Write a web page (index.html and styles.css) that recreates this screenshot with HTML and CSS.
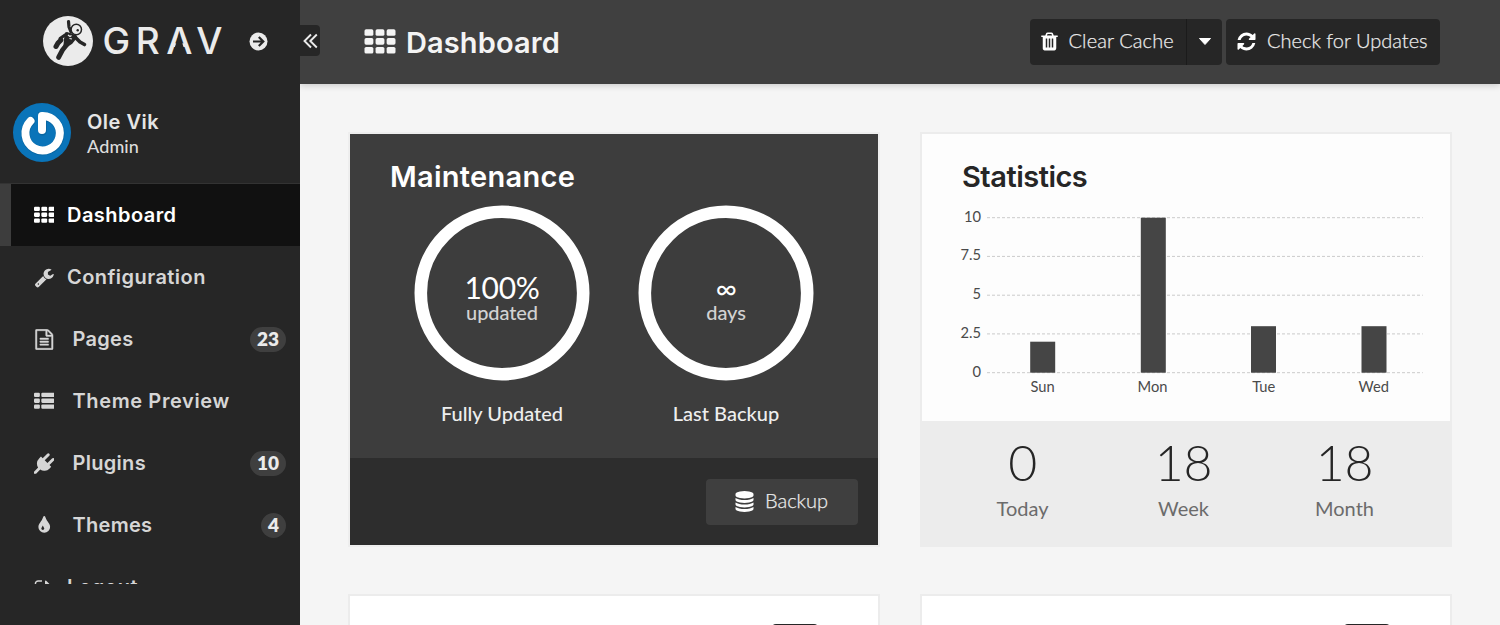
FILE: index.html
```html
<!DOCTYPE html>
<html lang="en">
<head>
<meta charset="utf-8">
<title>Dashboard</title>
<link rel="stylesheet" href="styles.css">
</head>
<body>
<svg class="defs" width="0" height="0" aria-hidden="true">
  <symbol id="th" viewBox="0 0 1792 1792"><g>
    <rect x="0" y="128" width="512" height="384" rx="96"/><rect x="640" y="128" width="512" height="384" rx="96"/><rect x="1280" y="128" width="512" height="384" rx="96"/>
    <rect x="0" y="640" width="512" height="384" rx="96"/><rect x="640" y="640" width="512" height="384" rx="96"/><rect x="1280" y="640" width="512" height="384" rx="96"/>
    <rect x="0" y="1152" width="512" height="384" rx="96"/><rect x="640" y="1152" width="512" height="384" rx="96"/><rect x="1280" y="1152" width="512" height="384" rx="96"/></g></symbol>
  <symbol id="th-list" viewBox="0 0 1792 1792">
    <rect x="0" y="128" width="512" height="384" rx="96"/><rect x="640" y="128" width="1152" height="384" rx="96"/>
    <rect x="0" y="640" width="512" height="384" rx="96"/><rect x="640" y="640" width="1152" height="384" rx="96"/>
    <rect x="0" y="1152" width="512" height="384" rx="96"/><rect x="640" y="1152" width="1152" height="384" rx="96"/></symbol>
  <symbol id="wrench" viewBox="0 0 1792 1792"><path d="M448 1472q0-26-19-45t-45-19-45 19-19 45 19 45 45 19 45-19 19-45zm644-420l-682 682q-37 37-90 37-52 0-91-37l-106-108q-38-36-38-90 0-53 38-91l681-681q39 98 114.5 173.5t173.5 114.5zm634-435q0 39-23 106-47 134-164.5 217.5t-258.5 83.5q-185 0-316.5-131.5t-131.5-316.5 131.5-316.5 316.5-131.5q58 0 121.5 16.5t107.5 46.5q16 11 16 28t-16 28l-293 169v224l193 107q5-3 79-48.5t135.5-81 70.5-35.5q15 0 23.5 10t8.5 25z"/></symbol>
  <symbol id="file" viewBox="0 0 1792 1792"><path stroke-width="40" stroke="currentColor" d="M1596 380q28 28 48 76t20 88v1152q0 40-28 68t-68 28h-1344q-40 0-68-28t-28-68v-1600q0-40 28-68t68-28h896q40 0 88 20t76 48zm-444-244v376h376q-10-29-22-41l-313-313q-12-12-41-22zm384 1528v-1024h-416q-40 0-68-28t-28-68v-416h-768v1536h1280zm-1024-864q0-14 9-23t23-9h704q14 0 23 9t9 23v64q0 14-9 23t-23 9h-704q-14 0-23-9t-9-23v-64zm736 224q14 0 23 9t9 23v64q0 14-9 23t-23 9h-704q-14 0-23-9t-9-23v-64q0-14 9-23t23-9h704zm0 256q14 0 23 9t9 23v64q0 14-9 23t-23 9h-704q-14 0-23-9t-9-23v-64q0-14 9-23t23-9h704z"/></symbol>
  <symbol id="plug" viewBox="0 0 1792 1792"><path d="M1755 453q37 38 37 90.5t-37 90.5l-401 400 150 150-160 160q-163 163-389.5 186.5t-411.5-100.5l-362 362h-181v-181l362-362q-124-185-100.5-411.5t186.5-389.5l160-160 150 150 400-401q38-37 91-37t90 37 37 90.5-37 90.5l-400 401 234 234 401-400q38-37 91-37t90 37z"/></symbol>
  <symbol id="tint" viewBox="0 0 1792 1792"><path d="M896 1152q0-36-20-69-1-1-15.5-22.5t-25.5-38-25-44-21-50.5q-4-16-21-16t-21 16q-7 23-21 50.5t-25 44-25.5 38-15.5 22.5q-20 33-20 69 0 53 37.5 90.5t90.5 37.5 90.5-37.5 37.5-90.5zm512-128q0 212-150 362t-362 150-362-150-150-362q0-145 81-275 6-9 62.5-90.5t101-151 99.5-178 83-201.5q9-30 34-47t51-17 51.5 17 33.5 47q28 93 83 201.5t99.5 178 101 151 62.5 90.5q81 127 81 275z"/></symbol>
  <symbol id="sign-out" viewBox="0 0 1792 1792"><path d="M704 1440q0 4 1 20t.5 26.5-3 23.5-10 19.5-20.5 6.5h-320q-119 0-203.5-84.5t-84.5-203.5v-704q0-119 84.5-203.5t203.5-84.5h320q13 0 22.5 9.5t9.5 22.5q0 4 1 20t.5 26.5-3 23.5-10 19.5-20.5 6.5h-320q-66 0-113 47t-47 113v704q0 66 47 113t113 47h312l11.5 1 11.5 3 8 5.5 7 9 2 13.5zm928-544q0 26-19 45l-544 544q-19 19-45 19t-45-19-19-45v-288h-448q-26 0-45-19t-19-45v-384q0-26 19-45t45-19h448v-288q0-26 19-45t45-19 45 19l544 544q19 19 19 45z"/></symbol>
  <symbol id="refresh" viewBox="0 0 1792 1792"><path d="M1639 1056q0 5-1 7-64 268-268 434.5t-478 166.5q-146 0-282.5-55t-243.5-157l-129 129q-19 19-45 19t-45-19-19-45v-448q0-26 19-45t45-19h448q26 0 45 19t19 45-19 45l-137 137q71 66 161 102t187 36q134 0 250-65t186-179q11-17 53-117 8-23 30-23h192q13 0 22.5 9.5t9.5 22.5zm25-800v448q0 26-19 45t-45 19h-448q-26 0-45-19t-19-45 19-45l138-138q-148-137-349-137-134 0-250 65t-186 179q-11 17-53 117-8 23-30 23h-199q-13 0-22.5-9.5t-9.5-22.5v-7q65-268 270-434.5t480-166.5q146 0 284 55.5t245 156.5l130-129q19-19 45-19t45 19 19 45z"/></symbol>
  <symbol id="trash" viewBox="0 0 1792 1792"><path d="M704 1376v-704q0-14-9-23t-23-9h-64q-14 0-23 9t-9 23v704q0 14 9 23t23 9h64q14 0 23-9t9-23zm256 0v-704q0-14-9-23t-23-9h-64q-14 0-23 9t-9 23v704q0 14 9 23t23 9h64q14 0 23-9t9-23zm256 0v-704q0-14-9-23t-23-9h-64q-14 0-23 9t-9 23v704q0 14 9 23t23 9h64q14 0 23-9t9-23zm-544-992h448l-48-117q-7-9-17-11h-317q-10 2-17 11zm928 32v64q0 14-9 23t-23 9h-96v948q0 83-47 143.5t-113 60.5h-832q-66 0-113-58.5t-47-141.5v-952h-96q-14 0-23-9t-9-23v-64q0-14 9-23t23-9h309l70-167q15-37 54-63t79-26h320q40 0 79 26t54 63l70 167h309q14 0 23 9t9 23z"/></symbol>
  <symbol id="database" viewBox="0 0 1792 1792"><path d="M896 768q237 0 443-43t325-127v170q0 69-103 128t-280 93.5-385 34.5-385-34.5-280-93.5-103-128v-170q119 84 325 127t443 43zm0 768q237 0 443-43t325-127v170q0 69-103 128t-280 93.5-385 34.5-385-34.5-280-93.5-103-128v-170q119 84 325 127t443 43zm0-384q237 0 443-43t325-127v170q0 69-103 128t-280 93.5-385 34.5-385-34.5-280-93.5-103-128v-170q119 84 325 127t443 43zm0-1152q208 0 385 34.5t280 93.5 103 128v128q0 69-103 128t-280 93.5-385 34.5-385-34.5-280-93.5-103-128v-128q0-69 103-128t280-93.5 385-34.5z"/></symbol>
</svg>

<div class="app">
  <aside class="sidebar">
    <div class="brand">
      <svg class="logo" width="184" height="52" viewBox="42 15 184 52">
        <circle cx="68" cy="41" r="25" fill="#ebebeb"/>
        <g fill="none" stroke="#262626" stroke-linecap="round" stroke-linejoin="round">
          <path d="M68.500 21.500L69 27L71 32" stroke-width="3.200"/>
          <path d="M67 34.500L74.500 37L70.500 42L66 45Z" fill="#262626" stroke-width="5"/>
          <path d="M76 38L80 42L84.500 44.500" stroke-width="3.600"/>
          <path d="M65 35L60 38.500" stroke-width="3"/>
          <path d="M61 40L58 43L56 46.500" stroke-width="5"/>
          <path d="M66.500 45L62.500 50L58.500 57.500" stroke-width="4.800"/>
        </g>
        <circle cx="76.300" cy="29.500" r="5.200" fill="#ebebeb" stroke="#262626" stroke-width="1.500"/>
        <circle cx="77.700" cy="30.200" r="1.200" fill="#262626"/>
        <path d="M68 35l2 1.500 1.500-1M69.500 38.500l2.500.5" fill="none" stroke="#ebebeb" stroke-width="1.200"/>
        <text class="wordmark" y="54" x="102.500 135.700 166.300 196.300">GRAV</text>
        <path d="M179.200 34L184.700 50.500H173.700Z" fill="#262626"/>
      </svg>
      <svg class="go" width="19" height="19" viewBox="0 0 19 19"><circle cx="9.500" cy="9.500" r="9" fill="#ebebeb"/><path d="M4 9.500H14M9.800 5L14.300 9.500L9.800 14" fill="none" stroke="#262626" stroke-width="2.200"/></svg>
    </div>
    <div class="user">
      <svg width="58" height="59" viewBox="0 0 58 59">
        <ellipse cx="29" cy="29.500" rx="29" ry="29.500" fill="#0a74b9"/>
        <path d="M18.200 18A17.200 17.200 0 1 0 29.500 13.500V28" fill="none" stroke="#075788" stroke-opacity=".45" stroke-width="9" stroke-linecap="round"/>
        <path d="M17.500 18A17.200 17.200 0 1 0 29 13V27" fill="none" stroke="#fff" stroke-width="8" stroke-linecap="round" stroke-linejoin="round"/>
      </svg>
      <div class="who"><div class="name">Ole Vik</div><div class="role">Admin</div></div>
    </div>
    <nav class="nav">
      <a class="item active"><svg class="icon"><use href="#th"/></svg><span class="ls-m">Dashboard</span></a>
      <a class="item"><svg class="icon"><use href="#wrench"/></svg><span class="ls-m">Configuration</span></a>
      <a class="item wide"><svg class="icon"><use href="#file"/></svg><span class="ls-s">Pages</span><b class="badge">23</b></a>
      <a class="item wide"><svg class="icon"><use href="#th-list"/></svg><span class="ls-l">Theme Preview</span></a>
      <a class="item wide"><svg class="icon"><use href="#plug"/></svg><span class="ls-s">Plugins</span><b class="badge">10</b></a>
      <a class="item wide"><svg class="icon"><use href="#tint"/></svg><span class="ls-s">Themes</span><b class="badge">4</b></a>
      <a class="item"><svg class="icon"><use href="#sign-out"/></svg><span class="ls-l">Logout</span></a>
    </nav>
  </aside>

  <main class="main">
    <header class="topbar">
      <button class="collapse" aria-label="Collapse"><svg width="15" height="16" viewBox="0 0 15 16"><path d="M8 1.500L1.500 8L8 14.500M13.800 1.500L7.300 8L13.800 14.500" fill="none" stroke="#ebebeb" stroke-width="1.900"/></svg></button>
      <h1 class="title"><svg class="icon-lg"><use href="#th"/></svg><span>Dashboard</span></h1>
      <div class="actions">
        <div class="group"><button class="btn clear"><svg class="icon"><use href="#trash"/></svg><span>Clear Cache</span></button><button class="btn caret" aria-label="More"><svg width="12" height="7" viewBox="0 0 12 7"><path d="M.5.500H11.500L6 6.500Z" stroke="#fff" stroke-linejoin="round" fill="#fff"/></svg></button></div>
        <button class="btn check"><svg class="icon"><use href="#refresh"/></svg><span>Check for Updates</span></button>
      </div>
    </header>
    <div class="grid">
      <section class="card dark">
        <div class="body">
          <h2 class="h-maint">Maintenance</h2>
          <div class="rings">
            <div class="ring-col"><div class="ring"><svg class="track" viewBox="0 0 176 176"><circle cx="88" cy="88" r="81.200"/></svg><div class="big">100%</div><div class="small">updated</div></div><p>Fully Updated</p></div>
            <div class="ring-col"><div class="ring"><svg class="track" viewBox="0 0 176 176"><circle cx="88" cy="88" r="81.200"/></svg><div class="big inf">∞</div><div class="small">days</div></div><p>Last Backup</p></div>
          </div>
        </div>
        <div class="foot"><button class="btn backup"><svg class="icon"><use href="#database"/></svg><span>Backup</span></button></div>
      </section>
      <section class="card">
        <div class="body">
          <h2 class="h-stat">Statistics</h2>
          <svg class="chart" width="488" height="200" viewBox="942 205 488 200">
            <g class="lines"><path d="M987 217.700H1422.800M987 256.400H1422.800M987 295.200H1422.800M987 333.900H1422.800M987 372.700H1422.800"/></g>
            <g class="bars"><rect x="1030.200" y="341.700" width="25" height="31"/><rect x="1140.800" y="217.700" width="25" height="155"/><rect x="1251" y="326.200" width="25" height="46.500"/><rect x="1361.500" y="326.200" width="25" height="46.500"/></g>
            <g class="ylab"><text x="981" y="222">10</text><text x="981" y="260">7.5</text><text x="981" y="299">5</text><text x="981" y="338">2.5</text><text x="981" y="377">0</text></g>
            <g class="xlab"><text x="1042.500" y="392">Sun</text><text x="1152.500" y="392">Mon</text><text x="1263.700" y="392">Tue</text><text x="1373.700" y="392">Wed</text></g>
          </svg>
        </div>
        <div class="totals">
          <div><b>0</b><span>Today</span></div>
          <div><b>18</b><span>Week</span></div>
          <div><b>18</b><span>Month</span></div>
        </div>
      </section>
      <section class="card next"><div class="stub"></div></section>
      <section class="card next"><div class="stub"></div></section>
    </div>
  </main>
</div>
</body>
</html>
```
FILE: styles.css
```css
* { box-sizing: border-box; }
body { margin: 0; background: #f5f5f5; font-family: Lato, "Open Sans", sans-serif; -webkit-font-smoothing: antialiased; }
h1, h2, p { margin: 0; }
button { border: 0; padding: 0; font: inherit; }
.defs { position: absolute; }
.app { display: flex; width: 1500px; height: 625px; overflow: hidden; }

.sidebar { position: relative; z-index: 1; width: 300px; flex: none; height: 625px; background: #262626; color: #d6d6d6; }
.brand { height: 84px; display: flex; padding: 15px 0 0 42px; }
.wordmark { font: 500 37px Inter, sans-serif; fill: #ebebeb; }
.go { margin: 17px 0 0 23px; }
.user { height: 100px; border-bottom: 1px solid #333; padding: 19px 0 0 13px; display: flex; gap: 16px; }
.who { padding-top: 7px; }
.name { font: 600 20px/25px Inter, sans-serif; color: #e6e6e6; letter-spacing: .5px; }
.role { font-size: 18px; line-height: 23px; font-weight: 500; color: #dcdcdc; letter-spacing: .1px; }
.nav { height: 400px; overflow: hidden; }
.item { height: 62px; display: flex; align-items: center; padding: 0 14px 0 33.500px; font: 600 20px Inter, sans-serif; color: #d6d6d6; }
.item span { margin-left: 12.500px; flex: 1; }
.item.wide span { margin-left: 18px; }
.item .ls-s { letter-spacing: .3px; }
.item .ls-m { letter-spacing: .45px; }
.item .ls-l { letter-spacing: .62px; }
.item.active { background: #111; color: #fff; border-left: 11px solid #3d3d3d; padding-left: 22.500px; }
.icon { width: 21px; height: 21px; fill: currentColor; flex: none; }
.item .icon { width: 20.500px; margin-right: .5px; }
.badge { height: 25px; min-width: 25px; padding: 0 7px; border-radius: 13px; background: #3f3f3f; color: #ebebeb; font: 800 19px/24px Lato, sans-serif; text-align: center; }

.main { flex: 1; min-width: 0; }
.topbar { position: relative; height: 84px; background: #404040; display: flex; box-shadow: 0 1px 7px rgba(0,0,0,.2); }
.collapse { width: 20px; height: 31px; margin-top: 25px; background: #262626; border-radius: 0 4px 4px 0; padding: 0 0 0 3px; display: flex; align-items: center; }
.title { display: flex; align-items: center; margin-left: 44px; height: 84px; color: #f4f4f4; font: 600 29px Inter, sans-serif; letter-spacing: .1px; flex: 1; }
.title span { margin-left: 10px; }
.icon-lg { width: 32px; height: 31px; fill: currentColor; }
.actions { display: flex; gap: 4px; padding: 19px 60px 0 0; }
.group { display: flex; }
.btn { height: 46px; background: #262626; color: #ebebeb; border-radius: 4px; display: flex; align-items: center; font: 300 20px Lato, sans-serif; white-space: nowrap; -webkit-text-stroke: .25px #ebebeb; }
.btn .icon { fill: #fff; margin-top: -2px; }
.btn span { margin-top: -4px; }
.clear { width: 157px; padding-left: 8.500px; border-radius: 4px 0 0 4px; border-right: 1px solid #1b1b1b; }
.clear span { margin-left: 9px; letter-spacing: .1px; }
.caret { width: 35px; border-radius: 0 4px 4px 0; justify-content: center; }
.caret svg { margin-top: -2px; }
.check { width: 214px; padding-left: 10px; }
.check span { margin-left: 10px; }

.grid { display: grid; grid-template-columns: 532px 532px; gap: 47px 40px; padding: 48px 48px 0; }
.card { border: 2px solid #ececec; background: #fdfdfd; height: 415px; }
.card .body { height: 287px; padding: 22px 20px 0; }
.card h2 { font: 600 29px/42px Inter, sans-serif; padding-left: 20px; color: #262626; }
.card .h-stat { letter-spacing: -.5px; }
.card .h-maint { letter-spacing: .28px; }
.dark { background: #3d3d3d; border-color: #eee; }
.dark .body { height: 324px; padding: 22px 40px 0; }
.dark h2 { color: #fff; padding-left: 0; }
.rings { display: grid; grid-template-columns: 224px 224px; padding-top: 7px; }
.ring-col { display: flex; flex-direction: column; align-items: center; }
.ring { position: relative; width: 176px; height: 176px; text-align: center; padding-top: 68px; }
.track { position: absolute; inset: 0; fill: none; stroke: #fff; stroke-width: 12.600px; }
.big { font-size: 30px; line-height: 29px; color: #fff; letter-spacing: -.3px; }
.inf { font-size: 29px; }
.small { font-size: 20px; line-height: 21px; font-weight: 500; color: #d2d2d2; letter-spacing: -.1px; }
.ring-col p { margin-top: 20px; font-size: 20px; line-height: 24px; font-weight: 500; color: #eee; }
.foot { height: 87px; background: #2d2d2d; display: flex; justify-content: flex-end; padding: 21px 20px 0; }
.backup { width: 152px; background: #3f3f3f; padding-left: 28px; }
.backup .icon { margin-top: -1px; }
.backup span { margin-left: 10px; }
.chart { display: block; margin-top: 7px; }
.lines { fill: none; stroke: #000; stroke-opacity: .2; stroke-dasharray: 3 2; }
.bars { fill: #454545; }
.ylab, .xlab { font: 400 14.700px Lato, sans-serif; fill: #4a4a4a; }
.ylab { text-anchor: end; }
.xlab { text-anchor: middle; }
.totals { height: 125px; background: #ececec; display: grid; grid-template-columns: repeat(3, 161px); padding: 11px 0 0 20px; text-align: center; }
.totals b { display: block; font-weight: 300; font-size: 50px; line-height: 60px; color: #262626; letter-spacing: -.3px; }
.totals span { display: block; font-weight: 400; font-size: 20px; line-height: 24px; margin-top: 4px; color: #6b6b6b; }
.next { height: 100px; background: #fff; }
.stub { width: 46px; height: 46px; background: #262626; border-radius: 4px; margin: 28px 60.500px 0 auto; }
```
